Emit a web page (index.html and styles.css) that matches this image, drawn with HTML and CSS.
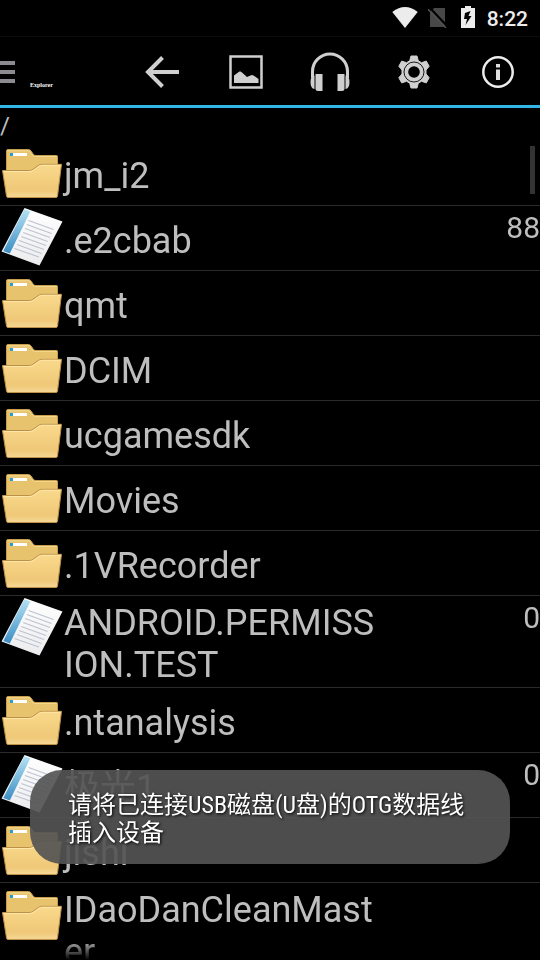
FILE: index.html
```
<!DOCTYPE html>
<html lang="zh-CN">
<head>
<meta charset="utf-8">
<meta name="viewport" content="width=device-width, initial-scale=1">
<title>Explorer</title>
<link rel="stylesheet" href="styles.css">
</head>
<body>
<svg class="defs" aria-hidden="true">
  <defs>
    <linearGradient id="front" x1="0" y1="0" x2="0" y2="1">
      <stop offset="0" stop-color="#fad98c"/>
      <stop offset=".78" stop-color="#efc878"/>
      <stop offset="1" stop-color="#f5d896"/>
    </linearGradient>
    <linearGradient id="spine" x1="0" y1="0" x2="0" y2="1">
      <stop offset="0" stop-color="#b4e2f3"/>
      <stop offset="1" stop-color="#3b8dc4"/>
    </linearGradient>
    <linearGradient id="paper" x1="0" y1="0" x2="0" y2="1">
      <stop offset="0" stop-color="#ffffff"/>
      <stop offset="1" stop-color="#ececee"/>
    </linearGradient>
    <symbol id="folder" viewBox="0 0 64 64">
      <path d="M6.500 50V10Q6.500 8.500 8 8.500H28.500Q30 8.500 31 10L33.500 13.500Q34.500 14.500 36 14.500H56.500Q57.500 14.500 57.500 15.500V50Z" fill="#e7c36e" stroke="#c79e4d"/>
      <path d="M7.500 9.800H29L33 14.800Q34 15.500 36 15.500H56.500" fill="none" stroke="#f2d78f"/>
      <path d="M10 12h3v3h-3z" fill="#2a9dcc"/>
      <path d="M13 12h14v3H13z" fill="#fff"/>
      <path d="M2.500 29.500H29.500Q31.500 29.500 33 28.300L38.500 24.400Q40 23.300 42 23.300H61.500L57.500 55Q57.300 56.500 56 56.500H8Q6.700 56.500 6.500 55Z" fill="url(#front)" stroke="#bd9049"/>
      <path d="M3.500 30.500H30Q32 30.500 34 29L39 25.400Q40.500 24.300 42 24.300H60.500" fill="none" stroke="#ffe7a7"/>
    </symbol>
    <symbol id="doc" viewBox="0 0 64 64">
      <path d="M24.500 2L62.500 15.500L39.500 59.500L1.500 45.500Z" fill="url(#paper)"/>
      <path d="M24.300 3.300L30.300 5.500L9.800 47.500L3.300 45Z" fill="url(#spine)"/>
      <path d="M28.500 14.500L53.500 23.500M26.800 18.500L51.500 27.500M25 22.500L50 31.500M23.200 26.500L47.600 35.500M21.200 30.500L46 39.500M19 34.500L44 43.500M17 38.500L41.500 47.500M14.500 42.500L39 51" stroke="#bcc2d2" stroke-width="1.100"/>
    </symbol>
  </defs>
</svg>

<header class="status">
  <svg width="26" height="22" viewBox="0 0 26 22" fill="#ececec"><path d="M.300 6Q13-4 25.700 6L13 22Z"/></svg>
  <svg class="sim" width="20" height="22" viewBox="0 0 20 22"><path d="M6 2H17V21H2V6Z" fill="#484848"/><path d="M1.800 1.800L19.500 20.500" stroke="#000" stroke-width="2"/><path d="M0 3.200L18 22" stroke="#505050" stroke-width="1.600"/></svg>
  <svg class="battery" width="14" height="22" viewBox="0 0 14 22"><path d="M4 0h6v2h4v20H0V2h4Z" fill="#ececec"/><path d="M9.500 5L4 7L3 13H6L4.500 19L10.500 10H7.500Z" fill="#000"/></svg>
  <time class="clock">8:22</time>
</header>

<nav class="toolbar">
  <button class="brand" type="button" aria-label="Menu">
    <svg width="15" height="22" viewBox="0 0 15 22" fill="#8b8b90"><path d="M0 0h15v4H0zM0 9h15v4H0zM0 18h15v4H0z"/></svg>
    <span class="title">Explorer</span>
  </button>
  <div class="actions">
    <button type="button" aria-label="Back">
      <svg width="40" height="40" viewBox="0 0 40 40" fill="none" stroke="#cfcfcf" stroke-width="4"><path d="M37 20H6M20.500 5.500L6 20L20.500 34.500"/></svg>
    </button>
    <button type="button" aria-label="Pictures">
      <svg width="40" height="40" viewBox="0 0 40 40"><path d="M4.500 4.500h31v31h-31z" fill="none" stroke="#cfcfcf" stroke-width="2.500"/><path d="M8 31V23.500L12 20.500L14 19.200L16 20.500L21 25L24.500 23.500L26 23L28 23.800L32.500 27V31Z" fill="#cfcfcf"/></svg>
    </button>
    <button type="button" aria-label="Music">
      <svg width="40" height="40" viewBox="0 0 40 40" fill="#cfcfcf"><path d="M2.500 26V19.500A17.500 17.500 0 0 1 37.500 19.500V26" fill="none" stroke="#cfcfcf" stroke-width="3"/><path d="M4.500 23.500Q.500 24 .500 30Q.500 36.500 4.500 37ZM35.500 23.500Q39.500 24 39.500 30Q39.500 36.500 35.500 37Z"/><path d="M5.500 22h7v17H8Q5.500 39 5.500 37ZM34.500 22h-7v17H32Q34.500 39 34.500 37Z"/></svg>
    </button>
    <button type="button" aria-label="Settings">
      <svg width="40" height="40" viewBox="0 0 40 40"><path d="M17 4h6l1.300 4.800 3.200 1.900 4.800-1.600L35.200 14.300 32 18v4l3.200 3.700-2.900 5.200-4.800-1.600-3.200 1.900L23 36h-6l-1.300-4.800-3.200-1.900-4.800 1.600-2.900-5.200L8 22v-4l-3.200-3.700 2.900-5.200 4.800 1.600 3.200-1.900Z" fill="#cfcfcf" stroke="#cfcfcf" stroke-linejoin="round"/><circle cx="20" cy="20" r="10" fill="none" stroke="#161616" stroke-width="1"/><circle cx="20" cy="20" r="5.800" fill="#000"/></svg>
    </button>
    <button type="button" aria-label="Info">
      <svg width="40" height="40" viewBox="0 0 40 40"><circle cx="20" cy="20" r="14.700" fill="none" stroke="#ececec" stroke-width="2.500"/><path d="M18 12h4v3.500h-4zM18 17.500h4V28h-4z" fill="#dedede"/></svg>
    </button>
  </div>
</nav>

<main class="browser">
  <p class="path">/</p>
  <div class="scroller">
    <ul class="files">
      <li class="row"><svg class="icon"><use href="#folder"/></svg><span class="name">jm_i2</span></li>
      <li class="row"><svg class="icon"><use href="#doc"/></svg><span class="name">.e2cbab</span><span class="size">88</span></li>
      <li class="row"><svg class="icon"><use href="#folder"/></svg><span class="name">qmt</span></li>
      <li class="row"><svg class="icon"><use href="#folder"/></svg><span class="name">DCIM</span></li>
      <li class="row"><svg class="icon"><use href="#folder"/></svg><span class="name">ucgamesdk</span></li>
      <li class="row"><svg class="icon"><use href="#folder"/></svg><span class="name">Movies</span></li>
      <li class="row"><svg class="icon"><use href="#folder"/></svg><span class="name">.1VRecorder</span></li>
      <li class="row"><svg class="icon"><use href="#doc"/></svg><span class="name">ANDROID.PERMISSION.TEST</span><span class="size">0</span></li>
      <li class="row"><svg class="icon"><use href="#folder"/></svg><span class="name">.ntanalysis</span></li>
      <li class="row"><svg class="icon"><use href="#doc"/></svg><span class="name">极光1</span><span class="size">0</span></li>
      <li class="row"><svg class="icon"><use href="#folder"/></svg><span class="name">jishi</span></li>
      <li class="row"><svg class="icon"><use href="#folder"/></svg><span class="name">IDaoDanCleanMaster</span></li>
    </ul>
    <div class="thumb"></div>
  </div>
</main>

<div class="toast" role="status">请将已连接USB磁盘(U盘)的OTG数据线插入设备</div>
</body>
</html>
```
FILE: styles.css
```
* {
  box-sizing: border-box;
}

body {
  margin: 0;
  height: 100vh;
  display: flex;
  flex-direction: column;
  overflow: hidden;
  background: #000;
  color: #bebebe;
  font-family: Roboto, "Noto Sans CJK SC", sans-serif;
}

svg {
  display: block;
  flex: none;
}

.defs {
  position: absolute;
  width: 0;
  height: 0;
}

.status {
  flex: none;
  height: 36px;
  padding: 0 12px;
  display: flex;
  align-items: center;
  justify-content: flex-end;
  gap: 10px;
}

.clock {
  padding-top: 1px;
  color: #ececec;
  font-size: 21px;
  font-weight: 500;
  line-height: 24px;
}

.sim {
  margin-right: 3px;
}

.battery {
  margin-right: 2px;
}

.status svg {
  margin-bottom: 2px;
}

.toolbar {
  flex: none;
  display: flex;
  justify-content: space-between;
  height: 72px;
  padding-top: 2px;
  border-top: 1px solid #0c0c0c;
  border-bottom: 3px solid #33b5e5;
}

.toolbar button {
  padding: 0;
  border: 0;
  background: none;
  color: inherit;
}

.brand {
  display: flex;
  align-items: center;
  gap: 15px;
}

.title {
  padding-top: 26px;
  color: #fff;
  font-family: "Liberation Serif", serif;
  font-size: 6px;
  font-weight: bold;
  line-height: 8px;
}

.actions {
  display: flex;
}

.actions button {
  width: 84px;
  display: flex;
  align-items: center;
  justify-content: center;
}

.browser {
  flex: 1;
  min-height: 0;
  display: flex;
  flex-direction: column;
}

.path {
  flex: none;
  margin: 0;
  padding-top: 4px;
  font-size: 24px;
  line-height: 29px;
}

.scroller {
  position: relative;
  flex: 1;
  min-height: 0;
  overflow: hidden;
  -webkit-mask-image: linear-gradient(to top, transparent, #000 20px);
  mask-image: linear-gradient(to top, transparent, #000 20px);
}

.files {
  margin: 0;
  padding: 0;
  list-style: none;
}

.row {
  display: grid;
  grid-template-columns: 64px minmax(0, 2fr) minmax(0, 1fr);
  border-bottom: 1px solid #2a2a2a;
}

.icon {
  width: 64px;
  height: 64px;
}

.name {
  align-self: center;
  padding: 6px 0 1px;
  font-size: 36px;
  line-height: 42px;
  overflow-wrap: anywhere;
}

.size {
  padding-top: 4px;
  text-align: right;
  font-size: 30px;
  line-height: 35px;
}

.thumb {
  position: absolute;
  top: 5px;
  right: 5px;
  width: 5px;
  height: 48px;
  background: #333;
}

.toast {
  position: fixed;
  left: 30px;
  right: 30px;
  bottom: 96px;
  padding: 21px 38px 17px;
  border-radius: 32px;
  background: rgba(84, 84, 84, 0.92);
  color: #fff;
  font-family: "Roboto Condensed", "Noto Sans CJK SC", sans-serif;
  font-size: 24px;
  line-height: 28px;
  text-shadow: 1px 1px 3px #000;
}
```
